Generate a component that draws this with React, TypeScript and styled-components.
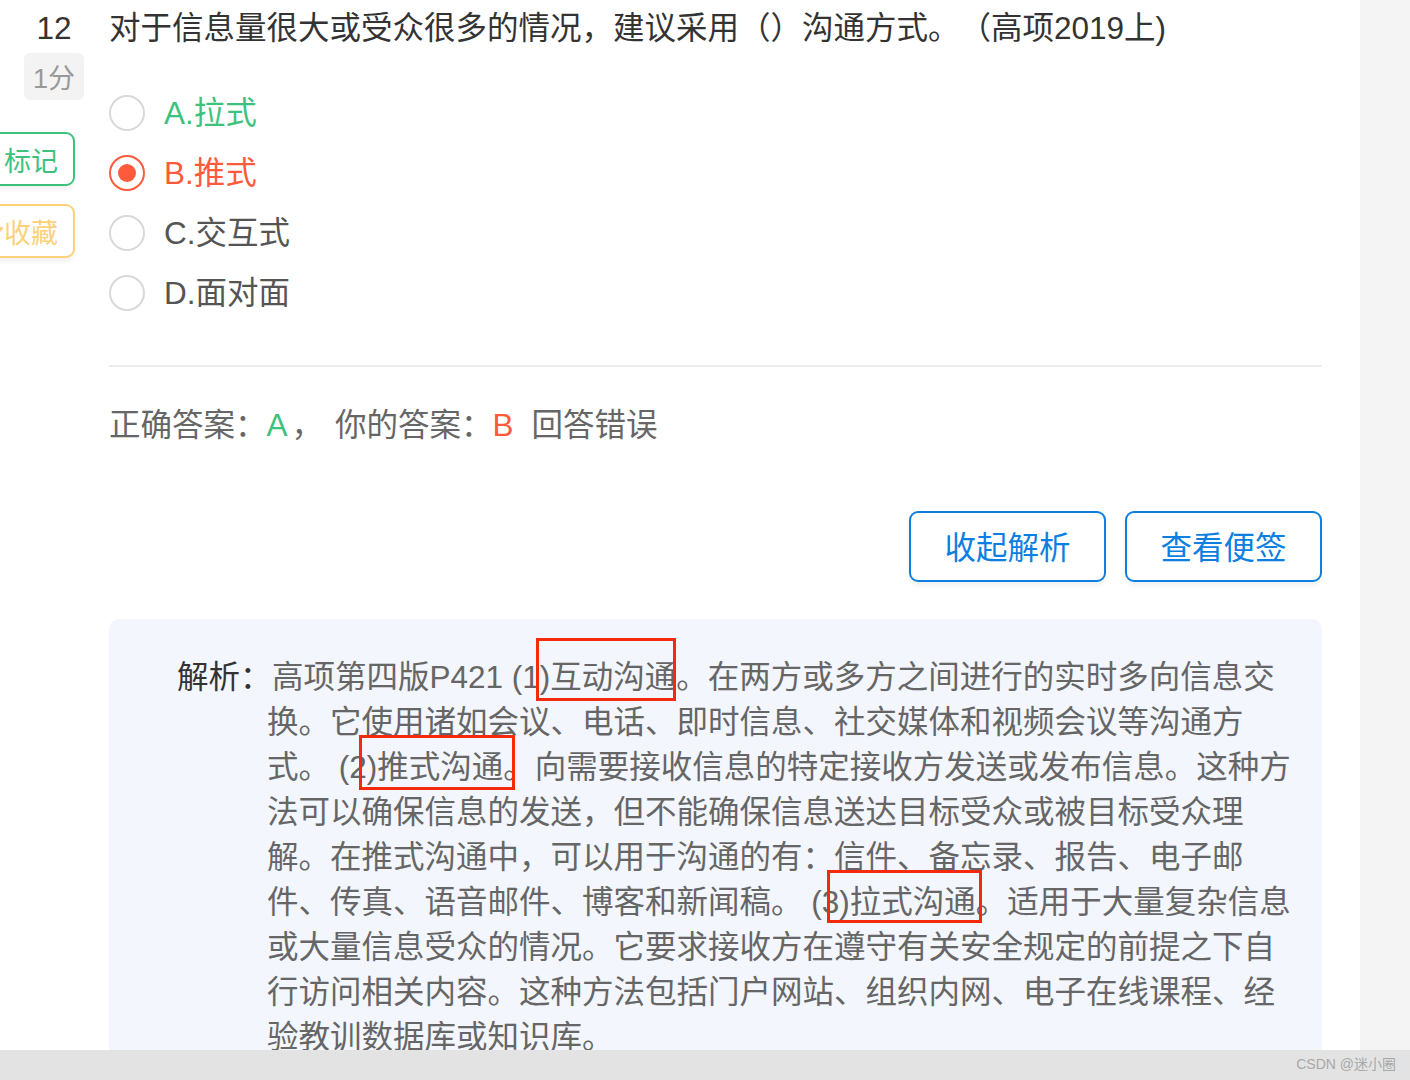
import React from "react";
import styled, { createGlobalStyle } from "styled-components";
import { Star } from "lucide-react";

const GlobalStyle = createGlobalStyle`
  html, body {
    margin: 0;
    padding: 0;
    background: #fff;
    overflow: hidden;
  }
  body {
    font-family: "Liberation Sans", "Noto Sans CJK SC", sans-serif;
    text-spacing-trim: space-all;
  }
`;

const Page = styled.div`
  display: flex;
  height: 1080px;
  overflow: hidden;
`;

const Main = styled.div`
  width: 1360px;
  flex-shrink: 0;
  display: flex;
  background: #fff;
`;

const Gutter = styled.div`
  flex: 1;
  background: #f4f4f4;
`;

const Side = styled.div`
  width: 109px;
  flex-shrink: 0;
  display: flex;
  flex-direction: column;
  align-items: flex-end;
  padding: 6px 25px 0 0;
  box-sizing: border-box;
`;

const Num = styled.div`
  width: 60px;
  text-align: center;
  font-size: 31.5px;
  line-height: 45px;
  color: #333;
`;

const Score = styled.div`
  margin-top: 2px;
  width: 60px;
  height: 47px;
  display: flex;
  align-items: center;
  justify-content: center;
  background: #f3f3f3;
  border-radius: 6px;
  font-size: 27px;
  color: #999;
`;

const Tag = styled.div<{ $color: string; $gap: number }>`
  margin-top: ${(p) => p.$gap}px;
  margin-right: 9px;
  height: 54px;
  box-sizing: border-box;
  display: flex;
  align-items: center;
  gap: 0;
  padding: 0 15px;
  border: 2px solid ${(p) => p.$color};
  border-radius: 9px;
  color: ${(p) => p.$color};
  font-size: 27px;
  white-space: nowrap;
  box-shadow: 0 4px 4px rgba(0, 0, 0, 0.05);
`;

const Content = styled.div`
  width: 1213px;
  flex-shrink: 0;
  padding-top: 6px;
`;

const Question = styled.div`
  font-size: 31.5px;
  line-height: 45px;
  color: #333;
  white-space: nowrap;
`;

const Options = styled.div`
  margin-top: 32px;
`;

const Option = styled.div<{ $color: string }>`
  height: 60px;
  display: flex;
  align-items: center;
  gap: 19px;
  font-size: 31.5px;
  color: ${(p) => p.$color};
`;

const OptionText = styled.span`
  padding-bottom: 6px;
`;

const Radio = styled.span<{ $checked?: boolean }>`
  width: 36px;
  height: 36px;
  box-sizing: border-box;
  border-radius: 50%;
  border: 2px solid ${(p) => (p.$checked ? "#ff5a3c" : "#d9d9d9")};
  display: flex;
  align-items: center;
  justify-content: center;

  &::after {
    content: "";
    width: 18px;
    height: 18px;
    border-radius: 50%;
    background: #ff5a3c;
    display: ${(p) => (p.$checked ? "block" : "none")};
  }
`;

const Divider = styled.div`
  margin-top: 42px;
  height: 2px;
  background: #ececec;
`;

const Answer = styled.div`
  margin-top: 36px;
  font-size: 31.5px;
  line-height: 45px;
  color: #666;
  white-space: nowrap;
`;

const Pick = styled.span<{ $color: string; $after: number }>`
  color: ${(p) => p.$color};
  margin-right: ${(p) => p.$after}px;
`;

const Sep = styled.span`
  margin-right: 12px;
`;

const Actions = styled.div`
  margin-top: 63px;
  display: flex;
  justify-content: flex-end;
  gap: 19px;
`;

const Button = styled.button`
  width: 197px;
  height: 71px;
  box-sizing: border-box;
  background: #fff;
  border: 2px solid #0d7fe1;
  border-radius: 9px;
  color: #0d7fe1;
  font-family: inherit;
  font-size: 31.5px;
  padding: 0 0 4px;
  cursor: pointer;
  box-shadow: 0 4px 4px rgba(0, 0, 0, 0.05);
`;

const Analysis = styled.div`
  margin-top: 37px;
  background: #f3f6fd;
  border-radius: 10px;
  padding: 36px 24px 60px 68px;
  display: flex;
  font-size: 31.5px;
  line-height: 45px;
`;

const Label = styled.div`
  width: 90px;
  flex-shrink: 0;
  color: #333;
  white-space: nowrap;
`;

const Body = styled.div`
  width: 1031px;
  color: #666;
  text-indent: 5px;
`;

const Mark = styled.span<{ $top: number; $bottom: number; $left: number; $right: number }>`
  position: relative;
  display: inline-block;
  text-indent: 0;
  &::after {
    content: "";
    position: absolute;
    top: ${(p) => p.$top}px;
    bottom: ${(p) => p.$bottom}px;
    left: ${(p) => p.$left}px;
    right: ${(p) => p.$right}px;
    border: 3px solid #f52a0c;
    pointer-events: none;
  }
`;

const Footer = styled.div`
  position: fixed;
  left: 0;
  right: 0;
  bottom: 0;
  height: 30px;
  background: #e3e3e3;
  display: flex;
  align-items: center;
  justify-content: flex-end;
  padding: 0 14px 4px 0;
  box-sizing: border-box;
  font-family: "Liberation Sans", "Noto Sans CJK SC", sans-serif;
  font-size: 14px;
  color: #a8a8a8;
`;

const options = [
  { key: "A", text: "拉式", color: "#3dc27e" },
  { key: "B", text: "推式", color: "#ff5a3c", checked: true },
  { key: "C", text: "交互式", color: "#555" },
  { key: "D", text: "面对面", color: "#555" },
];

export default function App() {
  return (
    <>
      <GlobalStyle />
      <Page>
        <Main>
          <Side>
            <Num>12</Num>
            <Score>1分</Score>
            <Tag $color="#3dc27e" $gap={32}>标记</Tag>
            <Tag $color="#fbd17a" $gap={18}>
              <Star size={24} strokeWidth={2} />
              收藏
            </Tag>
          </Side>
          <Content>
            <Question>
              对于信息量很大或受众很多的情况，建议采用（）沟通方式。（高项2019上)
            </Question>
            <Options>
              {options.map((o) => (
                <Option key={o.key} $color={o.color}>
                  <Radio $checked={o.checked} />
                  <OptionText>
                    {o.key}.{o.text}
                  </OptionText>
                </Option>
              ))}
            </Options>
            <Divider />
            <Answer>
              正确答案：<Pick $color="#3dc27e" $after={4}>A</Pick>
              <Sep>，</Sep>
              你的答案：<Pick $color="#ff5a3c" $after={18}>B</Pick>
              回答错误
            </Answer>
            <Actions>
              <Button>收起解析</Button>
              <Button>查看便签</Button>
            </Actions>
            <Analysis>
              <Label>解析：</Label>
              <Body>
                高项第四版P421 (1
                <Mark $top={-17} $bottom={-1} $left={-4} $right={0}>)互动沟通</Mark>
                。在两方或多方之间进行的实时多向信息交换。它使用诸如会议、电话、即时信息、社交媒体和视频会议等沟通方式。 (
                <Mark $top={-10} $bottom={0} $left={10} $right={20}>2)推式沟通。</Mark>
                向需要接收信息的特定接收方发送或发布信息。这种方法可以确保信息的发送，但不能确保信息送达目标受众或被目标受众理解。在推式沟通中，可以用于沟通的有：信件、备忘录、报告、电子邮件、传真、语音邮件、博客和新闻稿。 (
                <Mark $top={-10} $bottom={2} $left={5} $right={25}>3)拉式沟通。</Mark>
                适用于大量复杂信息或大量信息受众的情况。它要求接收方在遵守有关安全规定的前提之下自行访问相关内容。这种方法包括门户网站、组织内网、电子在线课程、经验教训数据库或知识库。
              </Body>
            </Analysis>
          </Content>
        </Main>
        <Gutter />
      </Page>
      <Footer>CSDN @迷小圈</Footer>
    </>
  );
}
